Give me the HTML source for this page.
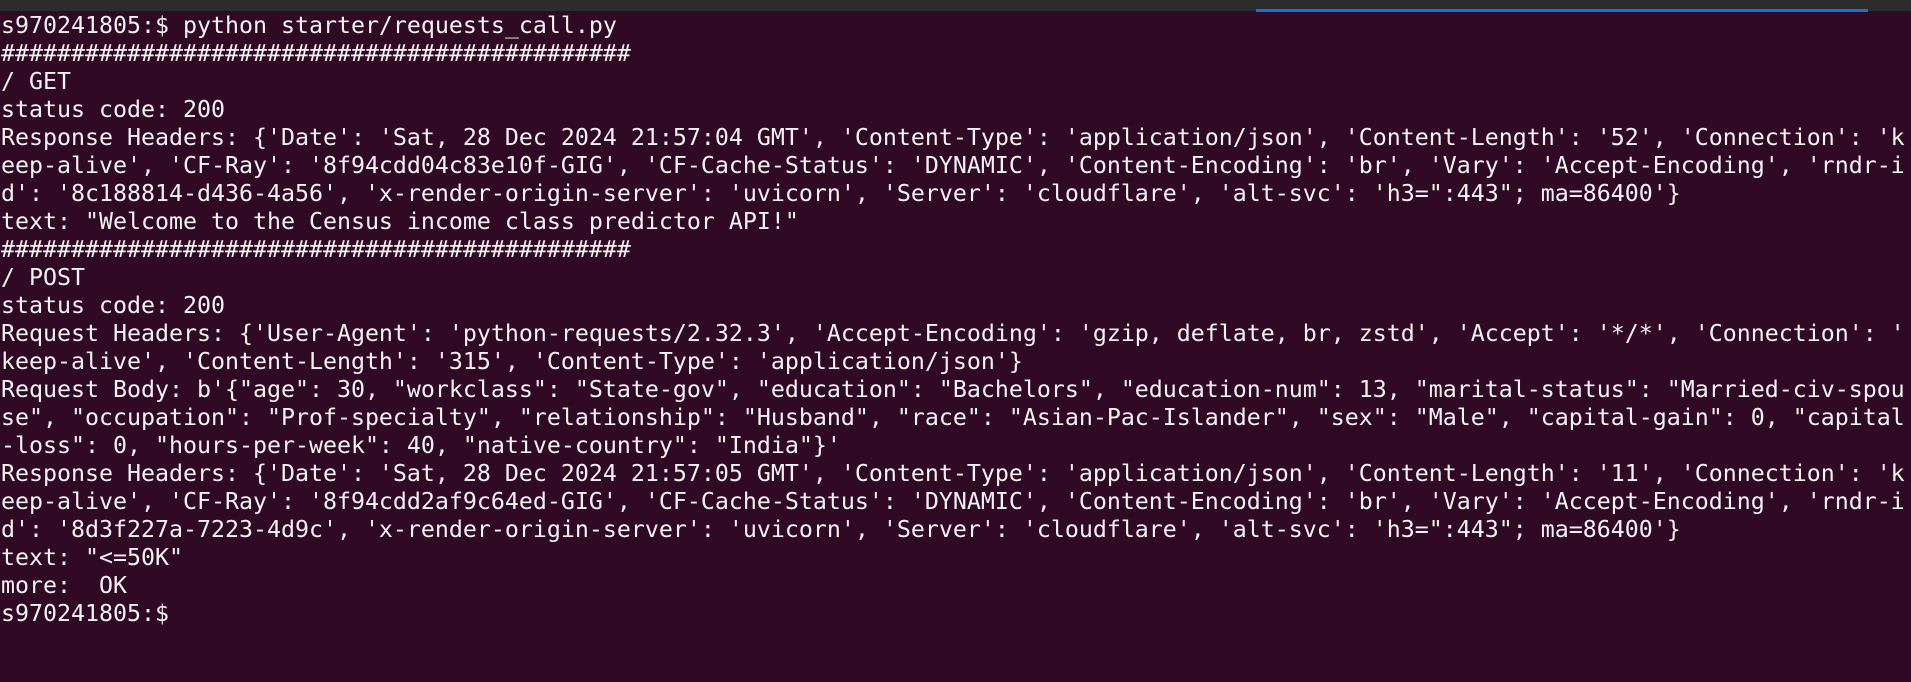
<!DOCTYPE html>
<html><head><meta charset="utf-8"><style>
html,body{margin:0;padding:0;}
body{width:1911px;height:682px;background:#300a24;overflow:hidden;position:relative;}
#bar{position:absolute;left:0;top:0;width:1911px;height:11px;background:#2c2c2c;}
#tab{position:absolute;left:1256px;top:9px;width:612px;height:3px;background:#1273de;}
pre{position:absolute;left:1px;top:12px;margin:0;font-family:"DejaVu Sans Mono","Liberation Mono",monospace;font-size:23.26px;line-height:28px;color:#f2f2f2;white-space:pre;}
</style></head><body>
<div id="bar"></div><div id="tab"></div>
<pre>s970241805:$ python starter/requests_call.py
#############################################
/ GET
status code: 200
Response Headers: {'Date': 'Sat, 28 Dec 2024 21:57:04 GMT', 'Content-Type': 'application/json', 'Content-Length': '52', 'Connection': 'k
eep-alive', 'CF-Ray': '8f94cdd04c83e10f-GIG', 'CF-Cache-Status': 'DYNAMIC', 'Content-Encoding': 'br', 'Vary': 'Accept-Encoding', 'rndr-i
d': '8c188814-d436-4a56', 'x-render-origin-server': 'uvicorn', 'Server': 'cloudflare', 'alt-svc': 'h3=":443"; ma=86400'}
text: "Welcome to the Census income class predictor API!"
#############################################
/ POST
status code: 200
Request Headers: {'User-Agent': 'python-requests/2.32.3', 'Accept-Encoding': 'gzip, deflate, br, zstd', 'Accept': '*/*', 'Connection': '
keep-alive', 'Content-Length': '315', 'Content-Type': 'application/json'}
Request Body: b'{"age": 30, "workclass": "State-gov", "education": "Bachelors", "education-num": 13, "marital-status": "Married-civ-spou
se", "occupation": "Prof-specialty", "relationship": "Husband", "race": "Asian-Pac-Islander", "sex": "Male", "capital-gain": 0, "capital
-loss": 0, "hours-per-week": 40, "native-country": "India"}'
Response Headers: {'Date': 'Sat, 28 Dec 2024 21:57:05 GMT', 'Content-Type': 'application/json', 'Content-Length': '11', 'Connection': 'k
eep-alive', 'CF-Ray': '8f94cdd2af9c64ed-GIG', 'CF-Cache-Status': 'DYNAMIC', 'Content-Encoding': 'br', 'Vary': 'Accept-Encoding', 'rndr-i
d': '8d3f227a-7223-4d9c', 'x-render-origin-server': 'uvicorn', 'Server': 'cloudflare', 'alt-svc': 'h3=":443"; ma=86400'}
text: "&lt;=50K"
more:  OK
s970241805:$ </pre>
</body></html>
